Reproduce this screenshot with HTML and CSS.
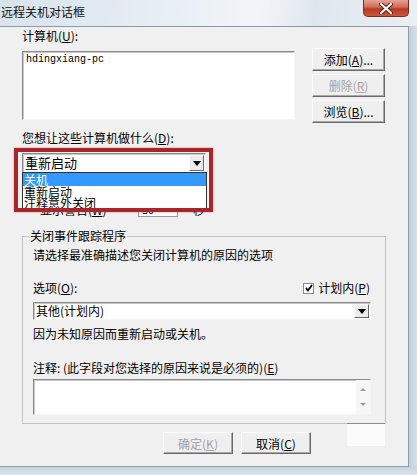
FILE: index.html
```html
<!DOCTYPE html>
<html lang="zh-CN">
<head>
<meta charset="utf-8">
<title>远程关机对话框</title>
<link rel="stylesheet" href="styles.css">
</head>
<body>
<div class="screen">
  <div class="titlebar">
    <span class="title">远程关机对话框</span>
    <div class="close">
      <svg width="16" height="11" viewBox="0 0 16 11"><path d="M3 1 L13 10 M13 1 L3 10" stroke="#5a1a10" stroke-width="4" stroke-linecap="round"/><path d="M3 1 L13 10 M13 1 L3 10" stroke="#fff" stroke-width="2.2" stroke-linecap="round"/></svg>
    </div>
  </div>
  <div class="mid">
    <div class="client">
      <div class="lbl">计算机(<u>U</u>):</div>
      <div class="row1">
        <div class="listbox">hdingxiang-pc</div>
        <div class="btncol">
          <div class="btn">添加(<u>A</u>)...</div>
          <div class="btn disabled">删除(<u>R</u>)</div>
          <div class="btn">浏览(<u>B</u>)...</div>
        </div>
      </div>
      <div class="lbl lbl2">您想让这些计算机做什么(<u>D</u>):</div>
      <div class="combo combo1">
        <span class="ctext">重新启动</span>
        <span class="carrow"><svg width="8" height="5" viewBox="0 0 8 5"><path d="M0 0 H8 L4 5 Z" fill="#000"/></svg></span>
      </div>
      <div class="warnrow">
        <span class="warnlbl">显示警告(<u>W</u>)</span>
        <span class="secbox">30</span>
        <span class="sec">秒</span>
      </div>
      <fieldset class="group">
        <legend>关闭事件跟踪程序</legend>
        <div class="ginner">
          <div class="lbl">请选择最准确描述您关闭计算机的原因的选项</div>
          <div class="optrow">
            <span>选项(<u>O</u>):</span>
            <span class="chkwrap"><span class="chk"><svg width="8" height="8" viewBox="0 0 8 8"><path d="M1 4 L3 6.5 L7 1" stroke="#000" stroke-width="1.8" fill="none"/></svg></span>计划内(<u>P</u>)</span>
          </div>
          <div class="combo combo2">
            <span class="ctext">其他(计划内)</span>
            <span class="carrow"><svg width="8" height="5" viewBox="0 0 8 5"><path d="M0 0 H8 L4 5 Z" fill="#000"/></svg></span>
          </div>
          <div class="lbl desc">因为未知原因而重新启动或关机。</div>
          <div class="lbl note">注释: (此字段对您选择的原因来说是必须的)(<u>E</u>)</div>
          <div class="textarea">
            <span class="scroll"><svg width="8" height="30" viewBox="0 0 8 30"><path d="M1 9 L4 6 L7 9 Z" fill="#9a9a9a"/><path d="M1 21 L4 24 L7 21 Z" fill="#9a9a9a"/></svg></span>
          </div>
        </div>
      </fieldset>
      <div class="btnrow">
        <div class="btn wide disabled">确定(<u>K</u>)</div>
        <div class="btn wide">取消(<u>C</u>)</div>
      </div>
      <div class="dropdown">
        <div class="item sel">关机</div>
        <div class="item">重新启动</div>
        <div class="item">注释意外关闭</div>
      </div>
      <div class="redbox"></div>
      <div class="watermark"></div>
    </div>
    <div class="rframe"></div>
  </div>
  <div class="bframe"></div>
</div>
</body>
</html>
```

FILE: styles.css
```css
html, body {
  margin: 0;
  padding: 0;
}
body {
  width: 417px;
  height: 475px;
  overflow: hidden;
  font-family: "Noto Sans CJK SC", "Noto Sans", sans-serif;
  font-size: 12px;
  color: #000;
}
u { text-decoration: underline; }
.screen {
  width: 417px;
  height: 475px;
  display: flex;
  flex-direction: column;
  background: #cfdbe6;
}
.titlebar {
  height: 26px;
  display: flex;
  align-items: flex-start;
  background: linear-gradient(100deg, #d9e3ec 0%, #e7eef4 40%, #f2f5f8 62%, #dfe7ee 75%, #e9eff4 100%);
}
.title {
  margin: 5px 0 0 1px;
  line-height: 14px;
  font-size: 12px;
  color: #111;
}
.close {
  margin-left: auto;
  margin-right: 8px;
  width: 46px;
  height: 17px;
  box-sizing: border-box;
  border: 1px solid #7a2a20;
  border-top: none;
  border-radius: 0 0 5px 5px;
  background: linear-gradient(#e3a497 0%, #d06a55 45%, #b93a22 55%, #c9563c 100%);
  display: flex;
  align-items: center;
  justify-content: center;
}
.mid {
  height: 441px;
  display: flex;
}
.client {
  position: relative;
  width: 409px;
  height: 441px;
  box-sizing: border-box;
  border: 1px solid #8c9aa8;
  border-left: none;
  background: #f0f0f0;
  padding: 1px 0 0 22px;
}
.rframe {
  flex: 1;
  background: linear-gradient(90deg, #c2cfdb, #d6e0e9);
}
.bframe {
  flex: 1;
  background: linear-gradient(#c5d2de, #dbe4ec);
}
.lbl {
  height: 14px;
  line-height: 14px;
  white-space: nowrap;
}
.client > .lbl:first-child { margin-top: 1px; }
.row1 {
  display: flex;
  margin-top: 5px;
}
.listbox {
  margin-top: 3px;
  width: 273px;
  height: 69px;
  box-sizing: border-box;
  background: #fff;
  border: 1px solid;
  border-color: #8a8a8a #f8f8f8 #f8f8f8 #8a8a8a;
  box-shadow: inset 1px 1px 0 #c8c8c8;
  padding: 2px 3px;
  font-family: "Liberation Mono", monospace;
  font-size: 10px;
  line-height: 12px;
}
.btncol {
  margin-left: 17px;
  display: flex;
  flex-direction: column;
  gap: 3px;
}
.btn {
  width: 73px;
  height: 23px;
  box-sizing: border-box;
  border: 1px solid;
  border-color: #fcfcfc #6a6a6a #6a6a6a #fcfcfc;
  box-shadow: inset -1px -1px 0 #a8a8a8;
  background: #efefef;
  display: flex;
  align-items: center;
  justify-content: center;
  white-space: nowrap;
}
.btn.disabled { color: #a3a3a3; }
.lbl2 { margin-top: 8px; }
.combo {
  display: flex;
  align-items: center;
  box-sizing: border-box;
  background: #fff;
  border: 1px solid;
  border-color: #8a8a8a #f4f4f4 #f4f4f4 #8a8a8a;
  box-shadow: inset 1px 1px 0 #c8c8c8;
}
.combo1 {
  margin-top: 8px;
  width: 184px;
  height: 20px;
  font-size: 13px;
}
.ctext {
  flex: 1;
  padding-left: 2px;
  line-height: 16px;
}
.carrow {
  width: 15px;
  height: 16px;
  margin-right: 1px;
  box-sizing: border-box;
  border: 1px solid;
  border-color: #fafafa #6a6a6a #6a6a6a #fafafa;
  background: #ececec;
  display: flex;
  align-items: center;
  justify-content: center;
}
.warnrow {
  margin-top: 28px;
  height: 16px;
  display: flex;
  align-items: center;
  padding-left: 18px;
}
.warnlbl { width: 98px; }
.secbox {
  width: 40px;
  height: 16px;
  box-sizing: border-box;
  background: #fff;
  border: 1px solid #9a9a9a;
  font-size: 11px;
  line-height: 14px;
  padding-left: 3px;
}
.sec { margin-left: 15px; }
.group {
  margin: 12px 0 0 0;
  padding: 0;
  width: 364px;
  box-sizing: border-box;
  border: 1px solid #c2c2c2;
  min-inline-size: 0;
}
.group legend {
  margin-left: 6px;
  padding: 0 1px;
  height: 14px;
  line-height: 14px;
}
.ginner {
  padding: 5px 14px 8px 10px;
}
.optrow {
  margin-top: 19px;
  height: 14px;
  line-height: 14px;
  display: flex;
  justify-content: space-between;
  padding-right: 1px;
}
.chkwrap {
  display: flex;
  align-items: center;
}
.chk {
  width: 11px;
  height: 11px;
  box-sizing: border-box;
  border: 1px solid #8a8a8a;
  background: #fff;
  margin-right: 4px;
  display: flex;
  align-items: center;
  justify-content: center;
}
.combo2 {
  margin-top: 7px;
  width: 338px;
  height: 18px;
}
.combo2 .ctext { line-height: 14px; }
.combo2 .carrow { height: 14px; }
.desc { margin-top: 7px; }
.note { margin-top: 20px; }
.textarea {
  margin-top: 4px;
  width: 338px;
  height: 36px;
  box-sizing: border-box;
  background: #fff;
  border: 1px solid;
  border-color: #8a8a8a #f4f4f4 #f4f4f4 #8a8a8a;
  box-shadow: inset 1px 1px 0 #c8c8c8;
  display: flex;
  justify-content: flex-end;
}
.scroll {
  width: 14px;
  background: #f6f6f6;
  display: flex;
  justify-content: center;
  align-items: center;
}
.btnrow {
  margin-top: 8px;
  padding-left: 141px;
  display: flex;
  gap: 8px;
}
.btn.wide {
  width: 70px;
  height: 22px;
}
.dropdown {
  position: absolute;
  left: 22px;
  top: 145px;
  width: 185px;
  height: 37px;
  box-sizing: border-box;
  border: 1px solid #333;
  background: #fff;
  font-size: 12px;
  overflow: hidden;
}
.item {
  height: 11px;
  line-height: 11px;
  padding-left: 1px;
  white-space: nowrap;
}
.item.sel {
  height: 13px;
  line-height: 13px;
  background: #3399ff;
  color: #fff;
}
.redbox {
  position: absolute;
  left: 14px;
  top: 121px;
  width: 199px;
  height: 64px;
  box-sizing: border-box;
  border: 4px solid #a8262a;
  box-shadow: 0 0 2px rgba(210, 90, 90, 0.6);
}
.watermark {
  position: absolute;
  left: 347px;
  top: 396px;
  width: 38px;
  height: 22px;
  background: rgba(255, 255, 255, 0.7);
  border-top: 1px solid #8a8a8a;
}
```
